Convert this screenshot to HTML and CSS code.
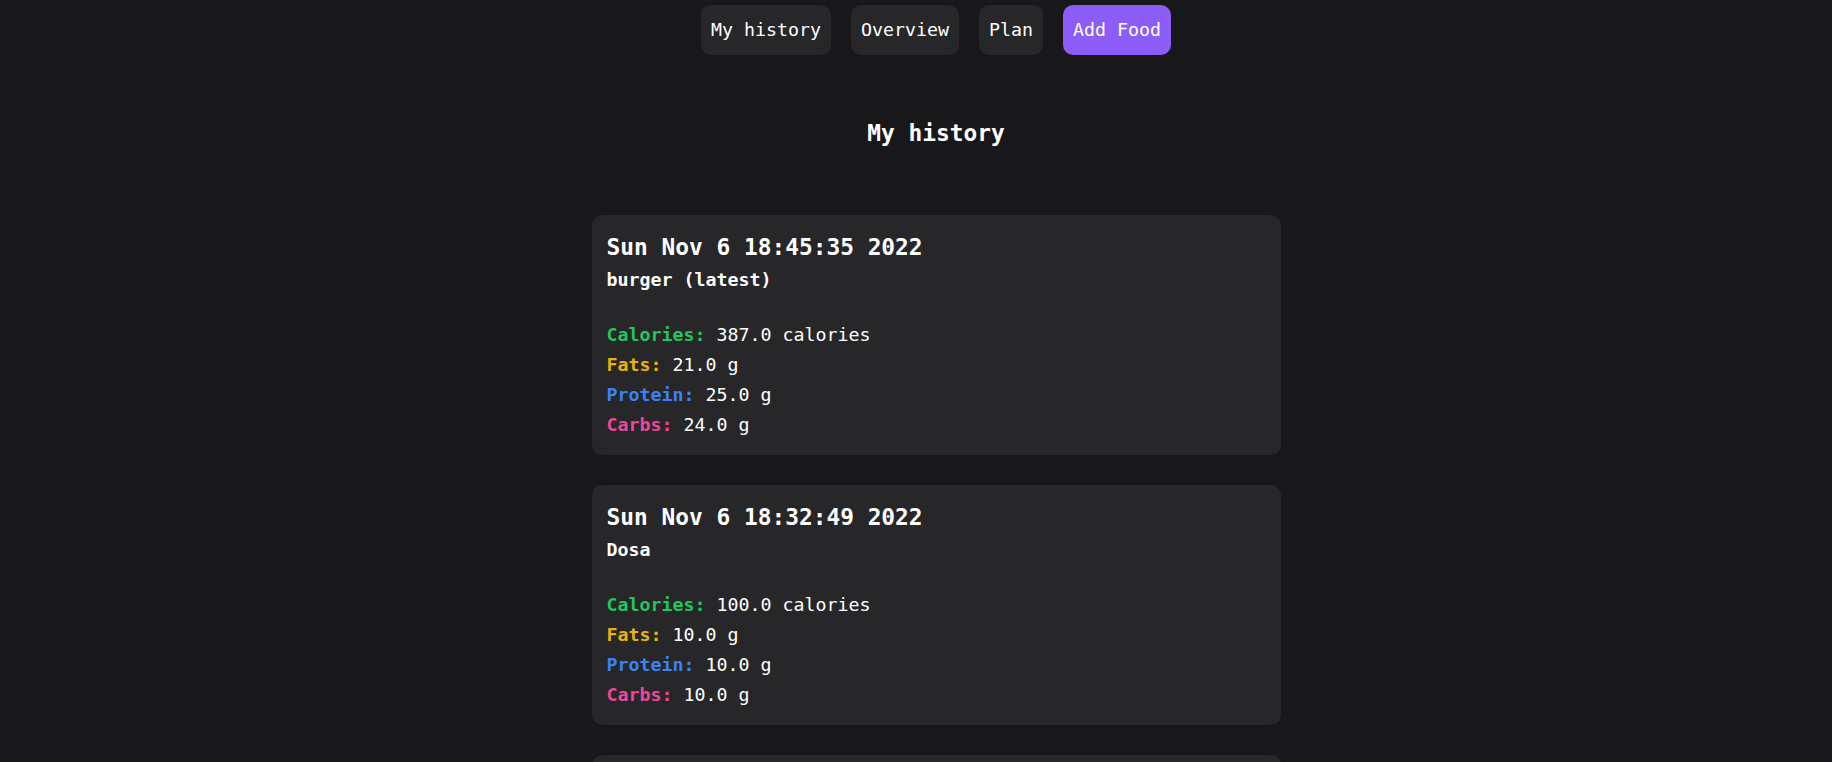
FILE: index.html
```html
<!DOCTYPE html>
<html lang="en">
<head>
<meta charset="utf-8">
<title>My history</title>
<link rel="stylesheet" href="styles.css">
</head>
<body>
<div class="page">
  <nav class="nav">
    <a class="nav-btn">My history</a>
    <a class="nav-btn">Overview</a>
    <a class="nav-btn">Plan</a>
    <a class="nav-btn nav-btn-primary">Add Food</a>
  </nav>
  <h1 class="heading">My history</h1>
  <main class="list">
    <section class="card">
      <h2 class="card-date">Sun Nov 6 18:45:35 2022</h2>
      <p class="card-name">burger (latest)</p>
      <div class="stats">
        <p class="stat"><span class="label cal">Calories:</span> 387.0 calories</p>
        <p class="stat"><span class="label fat">Fats:</span> 21.0 g</p>
        <p class="stat"><span class="label pro">Protein:</span> 25.0 g</p>
        <p class="stat"><span class="label carb">Carbs:</span> 24.0 g</p>
      </div>
    </section>
    <section class="card">
      <h2 class="card-date">Sun Nov 6 18:32:49 2022</h2>
      <p class="card-name">Dosa</p>
      <div class="stats">
        <p class="stat"><span class="label cal">Calories:</span> 100.0 calories</p>
        <p class="stat"><span class="label fat">Fats:</span> 10.0 g</p>
        <p class="stat"><span class="label pro">Protein:</span> 10.0 g</p>
        <p class="stat"><span class="label carb">Carbs:</span> 10.0 g</p>
      </div>
    </section>
    <section class="card">
      <h2 class="card-date">Sun Nov 6 18:20:12 2022</h2>
      <p class="card-name">Idli</p>
      <div class="stats">
        <p class="stat"><span class="label cal">Calories:</span> 58.0 calories</p>
        <p class="stat"><span class="label fat">Fats:</span> 0.4 g</p>
        <p class="stat"><span class="label pro">Protein:</span> 2.0 g</p>
        <p class="stat"><span class="label carb">Carbs:</span> 12.0 g</p>
      </div>
    </section>
  </main>
</div>
</body>
</html>
```

FILE: styles.css
```css
html, body {
  margin: 0;
  padding: 0;
  background: #18181b;
  color: #ffffff;
  font-family: "DejaVu Sans Mono", "Liberation Mono", monospace;
  font-size: 18.27px;
  line-height: 30px;
}

.page {
  padding-left: 40px;
  display: flex;
  flex-direction: column;
  align-items: center;
}

.nav {
  display: flex;
  justify-content: center;
  gap: 20px;
  padding-top: 5px;
}

.nav-btn {
  display: block;
  padding: 10px;
  border-radius: 10px;
  background: #27272a;
  color: #ffffff;
  line-height: 30px;
  cursor: pointer;
}

.nav-btn-primary {
  background: #8b5cf6;
}

.heading {
  margin: 61px 0 64px;
  font-size: 22.84px;
  line-height: 35px;
  font-weight: bold;
}

.list {
  display: flex;
  flex-direction: column;
  gap: 30px;
}

.card {
  box-sizing: border-box;
  width: 689px;
  padding: 15px;
  border-radius: 10px;
  background: #27272a;
}

.card-date {
  margin: 0;
  font-size: 22.84px;
  line-height: 35px;
  font-weight: bold;
}

.card-name {
  margin: 0;
  font-weight: bold;
}

.stats {
  margin-top: 25px;
}

.stat {
  margin: 0;
}

.label {
  font-weight: bold;
}

.cal { color: #22c55e; }
.fat { color: #eab308; }
.pro { color: #3b82f6; }
.carb { color: #ec4899; }
```
